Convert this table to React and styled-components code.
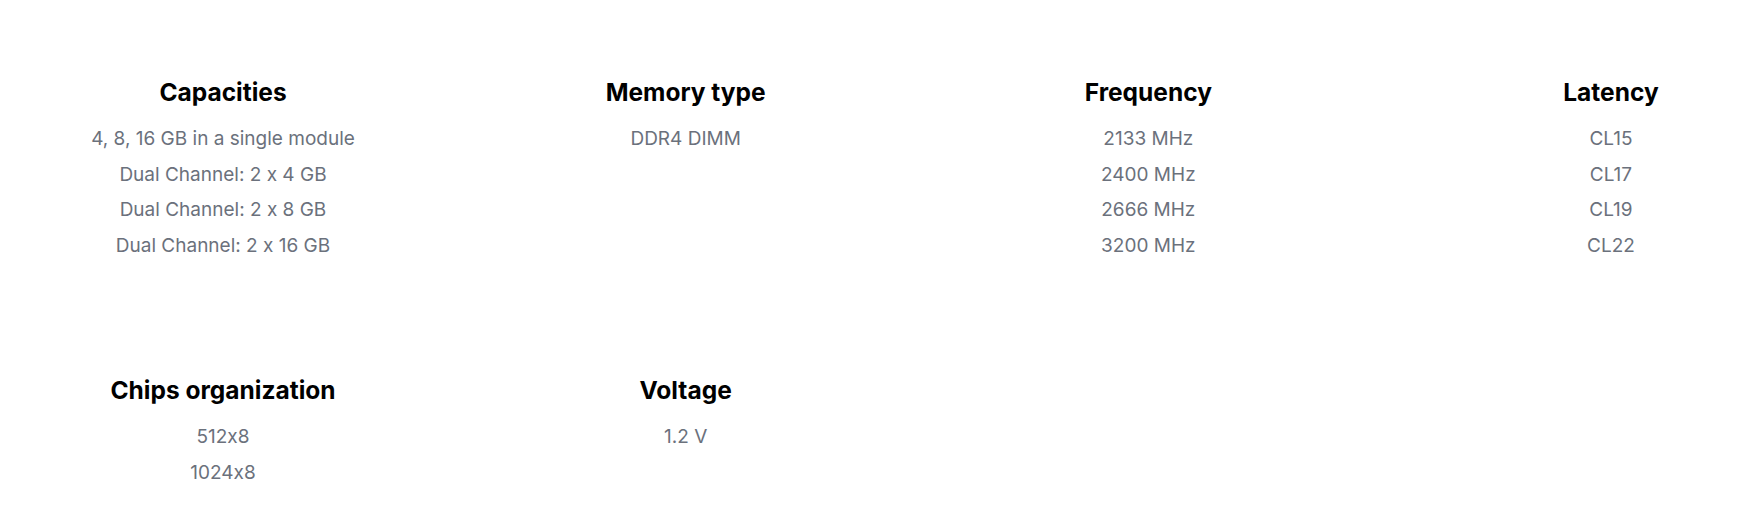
import React from "react";
import styled, { createGlobalStyle } from "styled-components";

const Global = createGlobalStyle`
  html, body { margin: 0; padding: 0; background: #ffffff; }
  body {
    font-family: Inter, "Noto Sans", sans-serif;
    font-feature-settings: "calt" 0;
  }
`;

const Page = styled.main`
  padding: 78px 0 0 83px;
`;

const Grid = styled.div`
  display: grid;
  grid-template-columns: repeat(4, 280px);
  column-gap: 182.67px;
  row-gap: 112px;
  align-items: start;
`;

const Spec = styled.section`
  display: flex;
  flex-direction: column;
  align-items: center;
  text-align: center;
`;

const Title = styled.h3`
  margin: 0 0 15px;
  font-size: 24.5px;
  line-height: 28px;
  font-weight: 700;
  color: #000000;
  white-space: nowrap;
  font-feature-settings: "calt" 0;
`;

const Values = styled.ul`
  list-style: none;
  margin: 0;
  padding: 0;
`;

const Value = styled.li`
  font-size: 19px;
  line-height: 35.7px;
  font-weight: 400;
  color: #6b717c;
  white-space: nowrap;
  font-feature-settings: "calt" 0;
`;

const specs = [
  { title: "Capacities", values: ["4, 8, 16 GB in a single module", "Dual Channel: 2 x 4 GB", "Dual Channel: 2 x 8 GB", "Dual Channel: 2 x 16 GB"] },
  { title: "Memory type", values: ["DDR4 DIMM"] },
  { title: "Frequency", values: ["2133 MHz", "2400 MHz", "2666 MHz", "3200 MHz"] },
  { title: "Latency", values: ["CL15", "CL17", "CL19", "CL22"] },
  { title: "Chips organization", values: ["512x8", "1024x8"] },
  { title: "Voltage", values: ["1.2 V"] },
];

export default function App() {
  return (
    <>
      <Global />
      <Page>
        <Grid>
          {specs.map((s) => (
            <Spec key={s.title}>
              <Title>{s.title}</Title>
              <Values>
                {s.values.map((v) => (
                  <Value key={v}>{v}</Value>
                ))}
              </Values>
            </Spec>
          ))}
        </Grid>
      </Page>
    </>
  );
}
